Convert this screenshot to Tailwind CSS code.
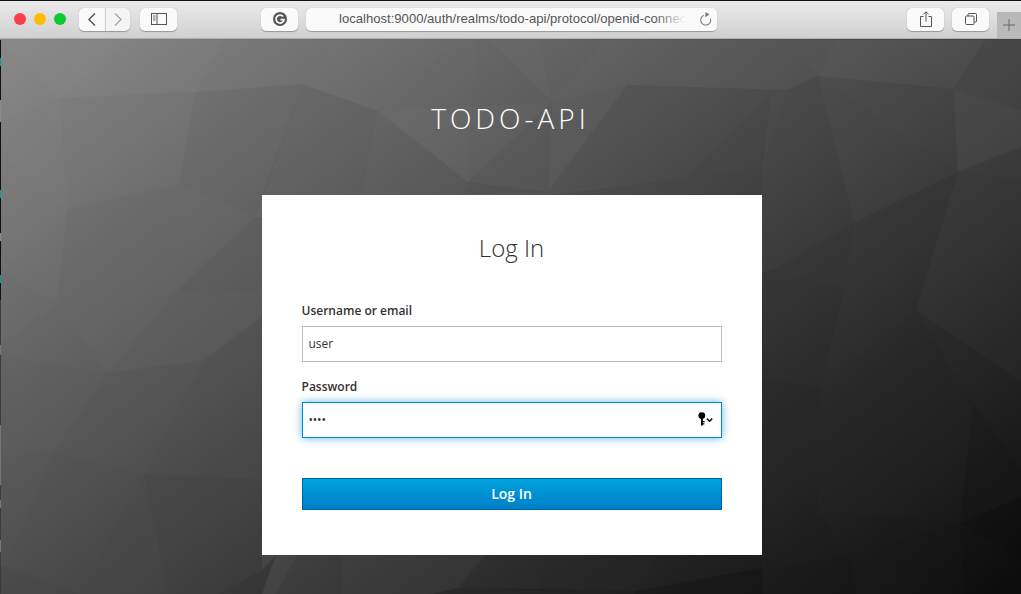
<!DOCTYPE html>
<html lang="en">
<head>
<meta charset="utf-8">
<title>Log In</title>
<script src="https://cdn.jsdelivr.net/npm/@tailwindcss/browser@4"></script>
</head>
<body class="w-[1021px] h-[594px] overflow-hidden bg-[#333] font-['Open_Sans',sans-serif]">
<div class="flex flex-col h-full">
  <!-- Browser toolbar -->
  <header class="relative flex items-center h-[39px] shrink-0 border-t border-t-[#101018] border-b border-b-[#b0b0b0] bg-gradient-to-b from-[#ebebeb] to-[#d0d0d0] pl-[14px] pb-[1px]">
    <div class="flex items-center gap-2">
      <span class="w-3 h-3 rounded-full bg-[#fc3d4a]"></span>
      <span class="w-3 h-3 rounded-full bg-[#fdbc00]"></span>
      <span class="w-3 h-3 rounded-full bg-[#0bcb34]"></span>
    </div>
    <div class="flex ml-[13px]">
      <div class="flex items-center justify-center w-[26px] h-[23px] bg-[#fafafa] rounded-l-[5px] shadow-[0_0.5px_1px_rgba(0,0,0,0.3)]">
        <svg width="10" height="15" viewBox="0 0 10 15" fill="none" stroke="#555" stroke-width="1.5"><path d="M8 1.5 2 7.5l6 6"/></svg>
      </div>
      <div class="flex items-center justify-center w-[25px] h-[23px] bg-[#f4f4f4] rounded-r-[5px] border-l border-l-[#d0d0d0] shadow-[0_0.5px_1px_rgba(0,0,0,0.3)]">
        <svg width="10" height="15" viewBox="0 0 10 15" fill="none" stroke="#aaa" stroke-width="1.5"><path d="M2 1.5l6 6-6 6"/></svg>
      </div>
    </div>
    <div class="flex items-center justify-center w-[37px] h-[23px] ml-[10px] bg-[#fafafa] rounded-[5px] shadow-[0_0.5px_1px_rgba(0,0,0,0.3)]">
      <svg width="16" height="12" viewBox="0 0 16 12" fill="none" stroke="#555"><rect x="0.5" y="0.5" width="15" height="11"/><path d="M6 0.5v11"/><path d="M2 3h2.5M2 5h2.5M2 7h2.5" stroke-width="0.9"/></svg>
    </div>
    <div class="flex items-center justify-center w-[37px] h-[23px] ml-[84px] bg-[#fafafa] rounded-[5px] shadow-[0_0.5px_1px_rgba(0,0,0,0.3)]">
      <svg width="14" height="14" viewBox="0 0 14 14"><circle cx="7" cy="7" r="7" fill="#555"/><path d="M10.2 4.6A4 4 0 1 0 11 7.6H7.4" fill="none" stroke="#fafafa" stroke-width="1.7"/></svg>
    </div>
    <div class="relative flex items-center w-[411px] h-[23px] ml-[8px] pl-[33px] bg-[#fafafa] rounded-[5px] shadow-[0_0.5px_1px_rgba(0,0,0,0.3)] overflow-hidden">
      <span class="whitespace-nowrap text-[#555] text-[13.1px] font-['Liberation_Sans',sans-serif]">localhost:9000/auth/realms/todo-api/protocol/openid-connect</span>
      <div class="absolute right-0 top-0 h-full w-[62px] flex items-center justify-end pr-[5px] bg-gradient-to-r from-[#fafafa]/0 via-[#fafafa] to-[#fafafa]">
        <svg width="13" height="14" viewBox="0 0 13 14" fill="none"><path d="M7 2.6a5 5 0 1 1-5 5" transform="rotate(70 6.5 7.6)" stroke="#777" stroke-width="1"/><path d="M6.4 0l4 2.6-4 2.6z" fill="#777"/></svg>
      </div>
    </div>
    <div class="flex items-center justify-center w-[37px] h-[23px] ml-[190px] bg-[#fafafa] rounded-[5px] shadow-[0_0.5px_1px_rgba(0,0,0,0.3)]">
      <svg width="12" height="16" viewBox="0 0 12 16" fill="none" stroke="#555"><path d="M3.5 5.5h-3v10h11v-10h-3"/><path d="M6 10.5V1M3.5 3.2 6 .8l2.5 2.4"/></svg>
    </div>
    <div class="flex items-center justify-center w-[37px] h-[23px] ml-[8px] bg-[#fafafa] rounded-[5px] shadow-[0_0.5px_1px_rgba(0,0,0,0.3)]">
      <svg width="12" height="12" viewBox="0 0 12 12" fill="none" stroke="#555"><rect x="0.5" y="3" width="8.5" height="8.5" rx="1"/><path d="M3 3V1.5a1 1 0 0 1 1-1h6.5a1 1 0 0 1 1 1V8a1 1 0 0 1-1 1H9"/></svg>
    </div>
    <div class="absolute right-0 bottom-0 flex items-center justify-center w-[24px] h-[26px] bg-[#b9b9b9]">
      <svg width="12" height="12" viewBox="0 0 12 12" stroke="#666" stroke-width="1"><path d="M6 0v12M0 6h12"/></svg>
    </div>
  </header>

  <!-- Page -->
  <main class="relative flex-1 flex flex-col items-center overflow-hidden">
    <svg class="absolute left-0 top-[-39px]" width="1021" height="594" viewBox="0 0 1021 594" aria-hidden="true">
      <defs>
        <linearGradient id="bg" gradientUnits="userSpaceOnUse" x1="0" y1="0" x2="687" y2="901">
          <stop offset="0" stop-color="#8a8a8a"/>
          <stop offset="1" stop-color="#0a0a0a"/>
        </linearGradient>
      </defs>
      <rect width="1021" height="594" fill="url(#bg)"/>
      <g fill="#fff">
        <polygon fill-opacity=".03" points="0,40 80,40 60,98"/>
        <polygon fill-opacity=".02" points="0,40 60,98 0,122"/>
        <polygon fill-opacity=".04" points="80,40 130,40 60,98"/>
        <polygon fill-opacity=".03" points="130,40 225,40 195,92 60,98"/>
        <polygon fill-opacity=".02" points="225,40 333,40 302,84 195,92"/>
        <polygon fill-opacity=".008" points="0,122 60,98 6,161"/>
        <polygon fill-opacity=".015" points="60,98 67,209 6,161"/>
        <polygon fill-opacity=".01" points="0,161 6,161 67,209 0,272"/>
        <polygon fill-opacity=".025" points="333,40 460,40 378,111 302,84"/>
        <polygon fill-opacity=".015" points="460,40 477,40 468,182 378,111"/>
        <polygon fill-opacity=".02" points="378,111 552,102 468,182"/>
        <polygon fill-opacity=".008" points="477,40 490,40 552,102 468,182"/>
        <polygon fill-opacity=".03" points="490,40 540,40 552,102"/>
        <polygon fill-opacity=".02" points="540,40 605,40 552,102"/>
        <polygon fill-opacity=".03" points="605,40 760,40 627,85 552,102"/>
        <polygon fill-opacity=".025" points="552,102 627,85 548,192"/>
        <polygon fill-opacity=".03" points="760,40 790,40 818,76 787,90 627,85"/>
        <polygon fill-opacity=".04" points="790,40 835,40 818,76"/>
        <polygon fill-opacity=".05" points="835,40 908,40 953,89 818,76"/>
        <polygon fill-opacity=".055" points="908,40 985,40 953,89"/>
        <polygon fill-opacity=".03" points="985,40 1021,40 1021,110 953,89"/>
        <polygon fill-opacity=".02" points="818,76 953,89 958,172"/>
        <polygon fill-opacity=".012" points="818,76 958,172 854,223"/>
        <polygon fill-opacity=".05" points="953,89 1021,110 1021,147 958,172"/>
        <polygon fill-opacity=".025" points="958,172 1021,147 1021,180"/>
        <polygon fill-opacity=".012" points="958,172 1021,180 1021,272 916,310"/>
        <polygon fill-opacity=".012" points="916,310 1021,272 1021,382"/>
      </g>
      <g fill="#000">
        <polygon fill-opacity=".02" points="67,209 179,184 175,292 57,303"/>
        <polygon fill-opacity=".03" points="195,92 302,84 265,195 255,217 179,184"/>
        <polygon fill-opacity=".01" points="179,184 255,217 175,292"/>
        <polygon fill-opacity=".05" points="255,217 262,217 262,290 175,292"/>
        <polygon fill-opacity=".01" points="0,272 57,303 0,344"/>
        <polygon fill-opacity=".02" points="57,303 175,292 108,373"/>
        <polygon fill-opacity=".03" points="175,292 262,290 262,316 204,360 108,373"/>
        <polygon fill-opacity=".035" points="0,344 57,303 108,373 0,355"/>
        <polygon fill-opacity=".05" points="0,355 108,373 53,453 0,457"/>
        <polygon fill-opacity=".07" points="108,373 204,360 144,474 53,453"/>
        <polygon fill-opacity=".09" points="204,360 262,316 262,479 144,474"/>
        <polygon fill-opacity=".07" points="0,457 53,453 5,566 0,566"/>
        <polygon fill-opacity=".09" points="53,453 144,474 78,594 5,566"/>
        <polygon fill-opacity=".12" points="0,566 5,566 78,594 0,594"/>
        <polygon fill-opacity=".1" points="144,474 168,594 78,594"/>
        <polygon fill-opacity=".13" points="144,474 262,479 262,570 218,594 168,594"/>
        <polygon fill-opacity=".18" points="262,570 276,555 262,594 218,594"/>
        <polygon fill-opacity=".04" points="302,84 378,111 362,195 262,195"/>
        <polygon fill-opacity=".01" points="378,111 468,182 462,195 362,195"/>
        <polygon fill-opacity=".05" points="468,182 548,192 462,195"/>
        <polygon fill-opacity=".025" points="627,85 683,178 548,192"/>
        <polygon fill-opacity=".025" points="627,85 787,90 770,98 683,178"/>
        <polygon fill-opacity=".05" points="683,178 770,98 763,167"/>
        <polygon fill-opacity=".06" points="683,178 763,167 762,195 548,195"/>
        <polygon fill-opacity=".02" points="787,90 818,76 854,223 763,167"/>
        <polygon fill-opacity=".02" points="763,167 854,223 772,270 762,273"/>
        <polygon fill-opacity=".05" points="854,223 958,172 916,310 845,288"/>
        <polygon fill-opacity=".07" points="854,223 845,288 772,270"/>
        <polygon fill-opacity=".1" points="772,270 845,288 821,388 762,377 762,273"/>
        <polygon fill-opacity=".05" points="845,288 916,310 821,388"/>
        <polygon fill-opacity=".08" points="916,310 973,403 821,388"/>
        <polygon fill-opacity=".03" points="916,310 1021,382 973,403"/>
        <polygon fill-opacity=".14" points="762,377 821,388 762,440"/>
        <polygon fill-opacity=".11" points="821,388 817,510 762,490 762,440"/>
        <polygon fill-opacity=".08" points="821,388 973,403 817,510"/>
        <polygon fill-opacity=".03" points="817,510 973,403 960,523"/>
        <polygon fill-opacity=".04" points="973,403 1021,382 1021,470"/>
        <polygon fill-opacity=".12" points="973,403 1021,470 1021,497 960,523"/>
        <polygon fill-opacity=".12" points="762,490 817,510 762,570"/>
        <polygon fill-opacity=".07" points="817,510 960,523 851,555"/>
        <polygon fill-opacity=".12" points="817,510 851,555 762,569"/>
        <polygon fill-opacity=".16" points="762,569 851,555 855,594 762,594"/>
        <polygon fill-opacity=".08" points="851,555 964,594 855,594"/>
        <polygon fill-opacity=".1" points="851,555 960,523 964,594"/>
        <polygon fill-opacity=".28" points="960,523 1021,497 1021,560"/>
        <polygon fill-opacity=".2" points="960,523 1021,560 1021,594 964,594"/>
        <polygon fill-opacity=".07" points="297,555 342,555 342,594 276,594"/>
        <polygon fill-opacity=".03" points="342,555 485,555 458,588 431,594 342,594"/>
        <polygon fill-opacity=".14" points="485,555 547,555 540,590 458,588"/>
        <polygon fill-opacity=".16" points="547,555 658,555 635,591 540,590"/>
        <polygon fill-opacity=".18" points="658,555 762,555 762,568 635,591"/>
        <polygon fill-opacity=".32" points="635,591 762,568 762,594 635,594"/>
        <polygon fill-opacity=".22" points="458,588 635,591 635,594 431,594"/>
      </g>
      <!-- strip at the window's left edge -->
      <g>
        <rect x="0" y="40" width="1" height="260" fill="#111"/>
        <rect x="0" y="300" width="1" height="294" fill="#3c3c3c"/>
        <rect x="0" y="58" width="1" height="8" fill="#0a9c9c"/>
        <rect x="0" y="100" width="1" height="22" fill="#8a8a8a"/>
        <rect x="0" y="190" width="1" height="8" fill="#0a9c9c"/>
        <rect x="0" y="233" width="1" height="8" fill="#8a8a8a"/>
        <rect x="0" y="275" width="1" height="8" fill="#0a9c9c"/>
        <rect x="0" y="345" width="1" height="10" fill="#777"/>
        <rect x="0" y="425" width="1" height="60" fill="#777"/>
        <rect x="0" y="500" width="1" height="8" fill="#777"/>
        <rect x="0" y="540" width="1" height="12" fill="#777"/>
      </g>
    </svg>

    <h1 class="relative mt-[60px] h-[38px] leading-[38px] text-[28px] font-[350] tracking-[4px] text-white">TODO-API</h1>

    <section class="relative mt-[58px] ml-[2px] w-[500px] h-[360px] bg-white px-10 pt-[34px] flex flex-col">
      <h2 class="text-center text-[24px] leading-[38px] font-light text-[#333]">Log In</h2>
      <form class="flex flex-col mt-[34px]">
        <label for="username" class="text-[12px] leading-[20px] font-semibold text-[#333]">Username or email</label>
        <input id="username" value="user" class="mt-[5px] h-[36px] px-[6px] pb-[2px] border border-[#bbb] text-[12px] text-[#333] outline-none bg-white">
        <label for="password" class="mt-[15px] text-[12px] leading-[20px] font-semibold text-[#333]">Password</label>
        <div class="relative mt-[5px] h-[36px]">
          <div id="password" class="flex items-center h-full px-[6px] border border-[#0088ce] shadow-[0_0_8px_rgba(0,136,206,0.6)] text-[12px] tracking-[-0.2px] text-[#333] bg-white">••••</div>
          <svg class="absolute right-[8px] top-[10px]" width="16" height="15" viewBox="0 0 16 15">
            <circle cx="3.8" cy="3.6" r="3.4" fill="#000"/>
            <path d="M3 5h1.8v8.6H3zM4.5 9h2.2v1.3H4.5zM4.5 11.2h1.8v1.3H4.5z" fill="#000"/>
            <path d="M9 6.6l2.6 2.6 2.6-2.6" fill="none" stroke="#111" stroke-width="1.5"/>
          </svg>
        </div>
        <button type="button" class="mt-[40px] h-[32px] pb-[2px] border border-[#00659c] bg-gradient-to-b from-[#00a3de] to-[#007fc7] text-white text-[14px] font-semibold">Log In</button>
      </form>
    </section>
  </main>
</div>
</body>
</html>
